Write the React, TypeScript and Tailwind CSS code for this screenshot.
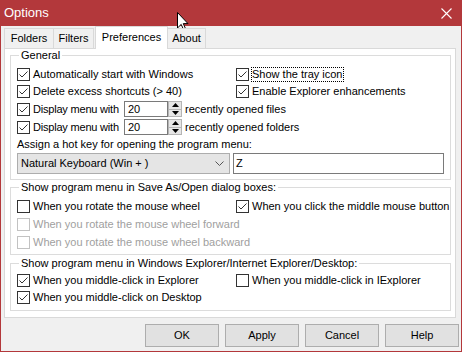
import React from "react";

function Box({ checked, disabled }: { checked?: boolean; disabled?: boolean }) {
  return (
    <span
      className={
        disabled
          ? "w-[13px] h-[13px] shrink-0 border border-[#c2c2c2] bg-white"
          : "w-[13px] h-[13px] shrink-0 border border-[#333333] bg-white flex items-center justify-center"
      }
    >
      {checked && (
        <svg width="11" height="11" viewBox="0 0 11 11">
          <path d="M1.5 5.5 L4 8 L9.5 2.5" fill="none" stroke="#333" strokeWidth="1" />
        </svg>
      )}
    </span>
  );
}

function Check({
  label,
  checked,
  disabled,
  focus,
  h = "h-[18px]",
}: {
  label: string;
  checked?: boolean;
  disabled?: boolean;
  focus?: boolean;
  h?: string;
}) {
  return (
    <div className={`flex items-center gap-[3px] ${h}`}>
      <Box checked={checked} disabled={disabled} />
      <span
        className={
          focus
            ? "outline outline-1 outline-dotted outline-black leading-[13px] whitespace-nowrap"
            : disabled
            ? "text-[#a0a0a0] whitespace-nowrap"
            : "whitespace-nowrap"
        }
      >
        {label}
      </span>
    </div>
  );
}

function Spin() {
  return (
    <div className="w-[14px] h-[16px] border border-[#b5b5b5] bg-[#e6e6e6] flex flex-col">
      <div className="flex-1 flex items-center justify-center border-b border-[#b5b5b5]">
        <svg width="7" height="4" viewBox="0 0 7 4">
          <path d="M0 4 L3.5 0 L7 4 Z" fill="#000" />
        </svg>
      </div>
      <div className="flex-1 flex items-center justify-center">
        <svg width="7" height="4" viewBox="0 0 7 4">
          <path d="M0 0 L3.5 4 L7 0 Z" fill="#000" />
        </svg>
      </div>
    </div>
  );
}

function MenuRow({ what }: { what: string }) {
  return (
    <div className="flex items-center h-[18px] pl-[6px]">
      <Box checked />
      <span className="w-[91px] ml-[3px] whitespace-nowrap tracking-[-0.2px]">Display menu with</span>
      <div className="w-[44px] h-[16px] border border-[#7a7a7a] bg-white pl-[3px] leading-[14px]">20</div>
      <Spin />
      <span className="ml-[3px] whitespace-nowrap">recently opened {what}</span>
    </div>
  );
}

export default function App() {
  const tab = "h-[20px] border border-b-0 border-[#d9d9d9] bg-[#f0f0f0] flex items-center justify-center";
  const btn = "w-[74px] h-[23px] border border-[#adadad] bg-[#e1e1e1] flex items-center justify-center";

  return (
    <div className="w-[462px] h-[352px] bg-[#f0f0f0] border-x border-b border-[#b3383b] flex flex-col relative overflow-hidden font-['Liberation_Sans',Arial,sans-serif] text-[11px] text-black">
      <div className="h-[26px] shrink-0 bg-[#b3383b] flex items-center justify-between pl-[3px] pr-[9px] text-white text-[13px]">
        <span>Options</span>
        <svg width="11" height="11" viewBox="0 0 11 11">
          <path d="M0.5 0.5 L10.5 10.5 M10.5 0.5 L0.5 10.5" stroke="#fff" strokeWidth="1.1" />
        </svg>
      </div>

      <div className="h-[22px] shrink-0 flex items-end pl-[3px] relative z-10">
        <div className={`${tab} w-[50px]`}>Folders</div>
        <div className={`${tab} w-[41px] -ml-px`}>Filters</div>
        <div className="h-[23px] -mb-px w-[73px] ml-px bg-white border border-b-0 border-[#d9d9d9] flex items-center justify-center pb-[2px]">
          Preferences
        </div>
        <div className={`${tab} w-[39px] -ml-px`}>About</div>
      </div>

      <div className="ml-[3px] w-[452px] h-[270px] shrink-0 bg-white border border-[#d9d9d9] flex flex-col pl-[5px] pr-[4px]">
        <fieldset className="border border-[#dcdcdc] pt-[4px] pb-[5px]">
          <legend className="ml-[8px] px-[2px] leading-[13px]">General</legend>
          <div className="grid grid-cols-[219px_1fr] pl-[6px]">
            <Check label="Automatically start with Windows" checked h="h-[17px]" />
            <Check label="Show the tray icon" checked focus h="h-[17px]" />
            <Check label="Delete excess shortcuts (> 40)" checked h="h-[17px]" />
            <Check label="Enable Explorer enhancements" checked h="h-[17px]" />
          </div>
          <MenuRow what="files" />
          <MenuRow what="folders" />
          <div className="h-[17px] flex items-center pl-[6px]">Assign a hot key for opening the program menu:</div>
          <div className="flex gap-[3px] pl-[6px]">
            <div className="w-[213px] h-[21px] border border-[#adadad] bg-[#e5e5e5] flex items-center justify-between pl-[3px] pr-[5px]">
              <span>Natural Keyboard (Win + )</span>
              <svg width="9" height="5" viewBox="0 0 9 5">
                <path d="M0.5 0.5 L4.5 4.5 L8.5 0.5" fill="none" stroke="#555" strokeWidth="1" />
              </svg>
            </div>
            <div className="w-[211px] h-[21px] border border-[#7a7a7a] bg-white flex items-center pl-[2px]">Z</div>
          </div>
        </fieldset>

        <fieldset className="border border-[#dcdcdc] mt-[1px] pt-[3px] pb-[3px]">
          <legend className="ml-[8px] px-[2px] leading-[13px]">Show program menu in Save As/Open dialog boxes:</legend>
          <div className="grid grid-cols-[219px_1fr] pl-[6px]">
            <Check label="When you rotate the mouse wheel" />
            <Check label="When you click the middle mouse button" checked />
          </div>
          <div className="pl-[6px]">
            <Check label="When you rotate the mouse wheel forward" disabled />
            <Check label="When you rotate the mouse wheel backward" disabled />
          </div>
        </fieldset>

        <fieldset className="border border-[#dcdcdc] mt-[2px] pt-[1px] pb-[4px]">
          <legend className="ml-[8px] px-[2px] leading-[13px]">
            Show program menu in Windows Explorer/Internet Explorer/Desktop:
          </legend>
          <div className="grid grid-cols-[219px_1fr] pl-[6px]">
            <Check label="When you middle-click in Explorer" checked />
            <Check label="When you middle-click in IExplorer" />
          </div>
          <div className="pl-[6px]">
            <Check label="When you middle-click on Desktop" checked h="h-[17px]" />
          </div>
        </fieldset>
      </div>

      <div className="mt-[6px] flex justify-end gap-[6px] pr-[2px]">
        <div className={btn}>OK</div>
        <div className={btn}>Apply</div>
        <div className={btn}>Cancel</div>
        <div className={btn}>Help</div>
      </div>

      <svg className="absolute left-[176px] top-[12px]" width="12" height="19" viewBox="0 0 12 19">
        <path d="M0.5 0.5 L0.5 16 L4.2 12.4 L6.8 18.2 L8.8 17.3 L6.3 11.6 L11 11.6 Z" fill="#fff" stroke="#000" strokeWidth="1" strokeLinejoin="round" />
      </svg>
    </div>
  );
}
